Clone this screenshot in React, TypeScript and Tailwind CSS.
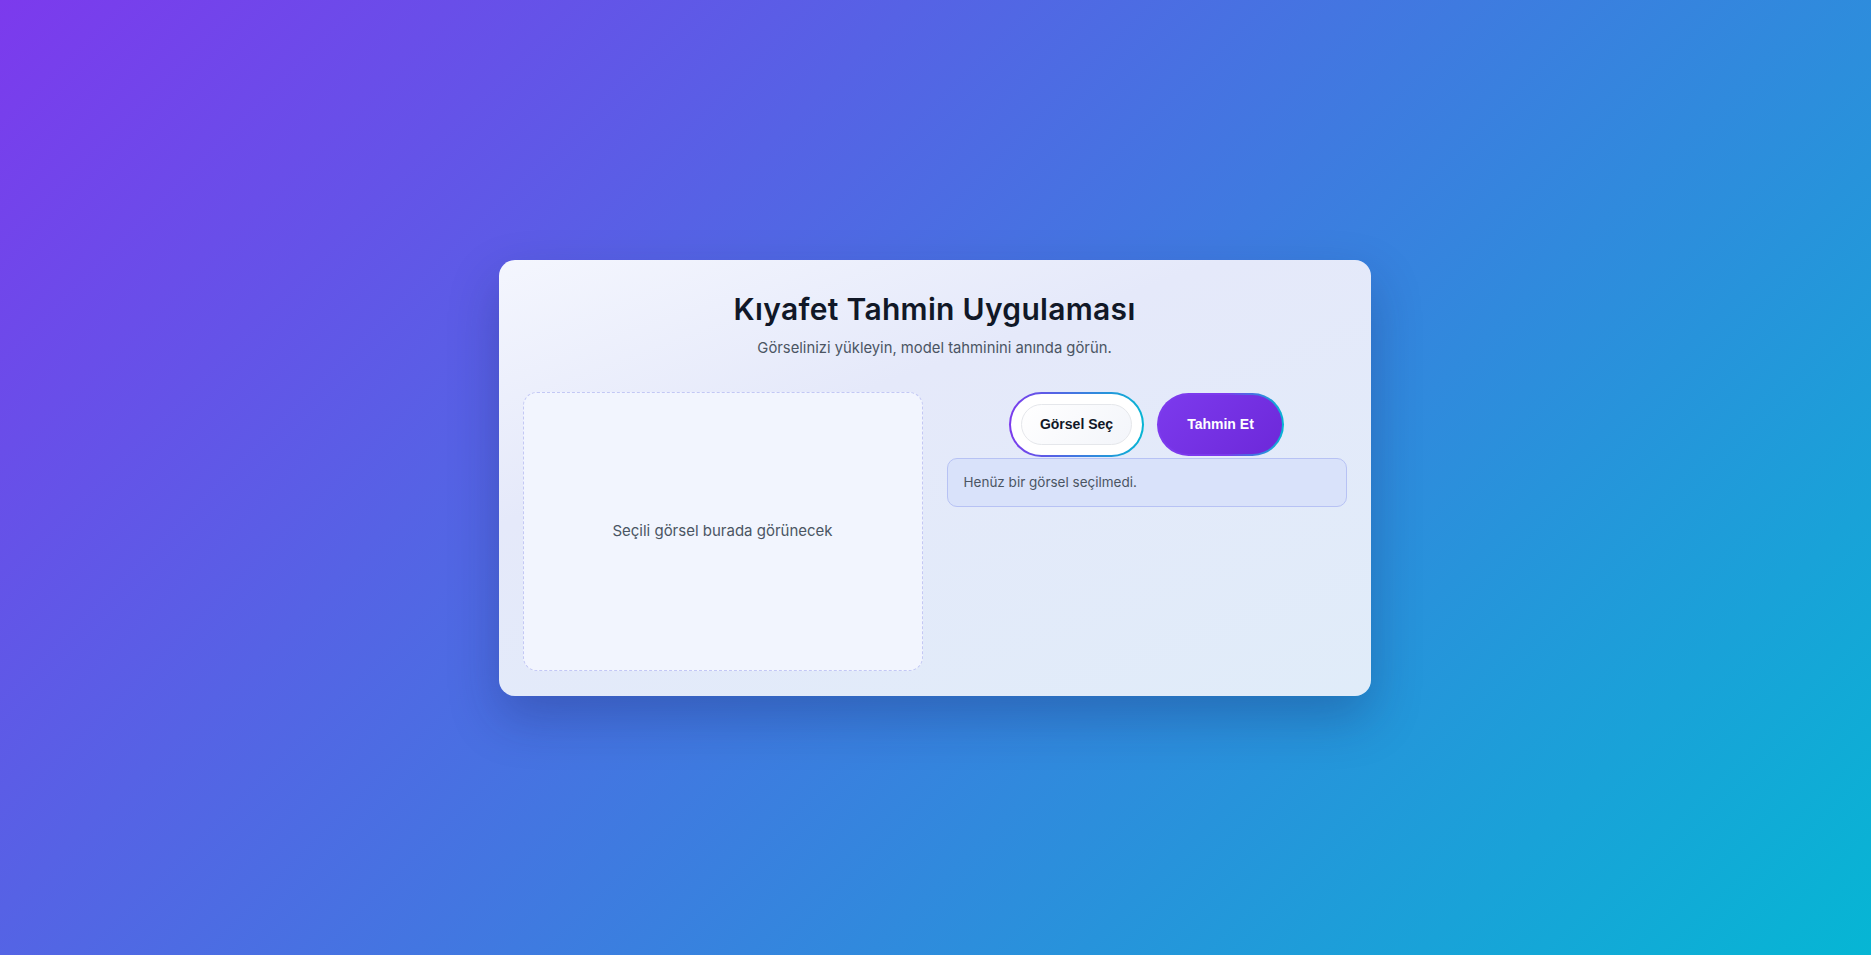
import React from "react";

const App = () => {
  return (
    <div className="min-h-screen w-full flex items-center justify-center bg-[linear-gradient(135deg,#7c3aed,#06b6d4)] font-['Inter',sans-serif]">
      <div className="w-[872px] -translate-x-[1px] rounded-2xl bg-[linear-gradient(160deg,#f4f6fe_0%,#e5e9fa_35%,#e0ecf9_100%)] shadow-[0_22px_50px_rgba(20,30,90,0.28)] px-6 pt-[29px] pb-[25px]">
        <h1 className="text-center text-[30px] leading-[40px] font-semibold text-[#111827] tracking-[0.3px]">
          Kıyafet Tahmin Uygulaması
        </h1>
        <p className="mt-[7px] text-center text-[14.8px] leading-6 text-[#4b5563]">
          Görselinizi yükleyin, model tahminini anında görün.
        </p>

        <div className="mt-8 grid grid-cols-2 gap-6">
          <div className="h-[279px] rounded-[14px] border border-dashed border-[#c3c8f5] bg-[#f2f5fe] flex items-center justify-center">
            <span className="text-[15px] text-[#4b5563]">Seçili görsel burada görünecek</span>
          </div>

          <div className="flex flex-col">
            <div className="flex items-center justify-center gap-[13px] h-[65px]">
              <button className="rounded-full p-[2px] bg-[linear-gradient(90deg,#7c3aed,#06b6d4)]">
                <span className="flex rounded-full bg-white p-[10px]">
                  <span className="flex items-center justify-center w-[111px] h-[41px] rounded-full border border-[#e5e7eb] bg-[linear-gradient(135deg,#ffffff,#f3f5fa)] font-['Liberation_Sans',Arial,sans-serif] font-bold text-[14px] text-[#111827]">
                    Görsel Seç
                  </span>
                </span>
              </button>
              <button className="rounded-full p-[2px] bg-[linear-gradient(90deg,#7c3aed_55%,#06b6d4)]">
                <span className="flex items-center justify-center w-[123px] h-[59px] rounded-full bg-[linear-gradient(135deg,#7c3aed,#6d28d9)] font-['Liberation_Sans',Arial,sans-serif] font-bold text-[14px] text-white">
                  Tahmin Et
                </span>
              </button>
            </div>
            <div className="mt-[1px] h-[49px] rounded-[10px] border border-[#b7c2f4] bg-[#d9e2fa] flex items-center px-4">
              <span className="text-[13.5px] text-[#4b5563]">Henüz bir görsel seçilmedi.</span>
            </div>
          </div>
        </div>
      </div>
    </div>
  );
};

export default App;
